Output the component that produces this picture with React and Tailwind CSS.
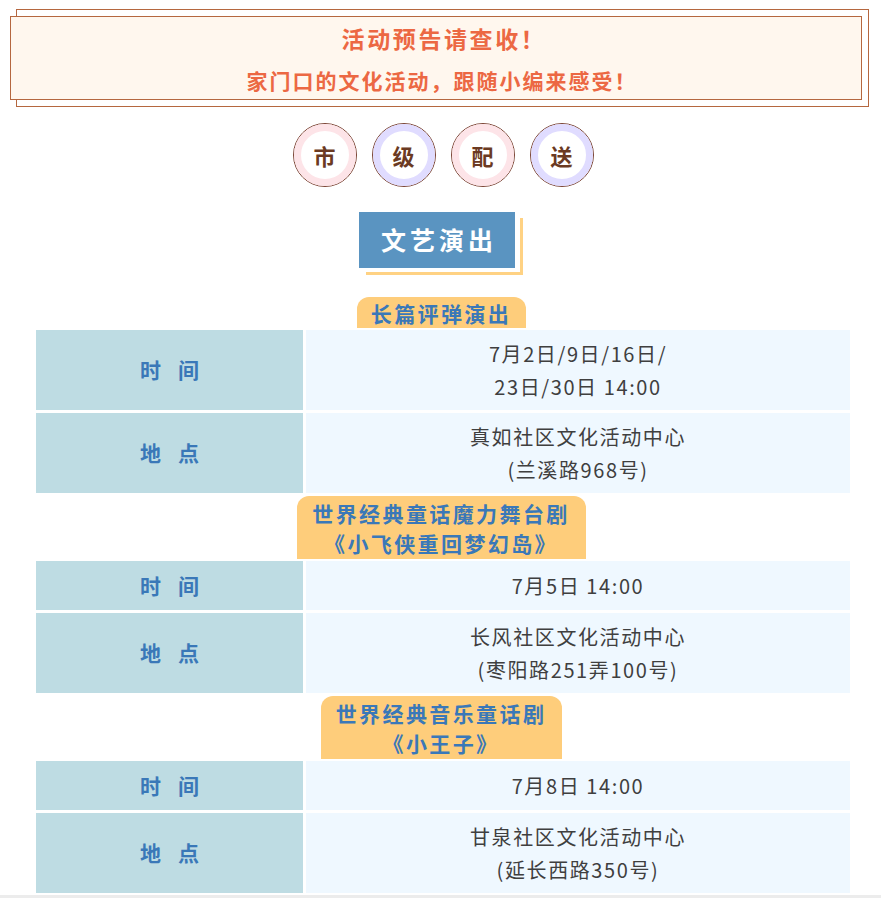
import React from "react";

const FONT = { fontFamily: '"Noto Sans CJK SC", "Noto Sans", sans-serif' };

const shows = [
  {
    title: ["长篇评弹演出"],
    width: "w-[169px]",
    time: ["7月2日/9日/16日/", "23日/30日 14:00"],
    place: ["真如社区文化活动中心", "(兰溪路968号)"],
  },
  {
    title: ["世界经典童话魔力舞台剧", "《小飞侠重回梦幻岛》"],
    width: "w-[289px]",
    time: ["7月5日 14:00"],
    place: ["长风社区文化活动中心", "(枣阳路251弄100号)"],
  },
  {
    title: ["世界经典音乐童话剧", "《小王子》"],
    width: "w-[241px]",
    time: ["7月8日 14:00"],
    place: ["甘泉社区文化活动中心", "(延长西路350号)"],
  },
];

function Circle({ char, ring }) {
  return (
    <div className="flex h-[64px] w-[64px] items-center justify-center rounded-full border border-[#7a4434] bg-white">
      <div className={`flex h-[62px] w-[62px] items-center justify-center rounded-full border-[7px] ${ring}`}>
        <span className="text-[22px] font-bold text-[#6b3a22]">{char}</span>
      </div>
    </div>
  );
}

function Row({ label, lines, tall }) {
  return (
    <div className={`flex gap-[3px] ${tall ? "h-[80px]" : "h-[49px]"}`}>
      <div className="flex w-[267px] items-center justify-center bg-[#bedce3]">
        <span className="pl-[17px] text-[21px] font-bold tracking-[17px] text-[#3a78b8]">{label}</span>
      </div>
      <div className="flex flex-1 flex-col items-center justify-center bg-[#eff8ff] text-[20px] leading-[33px] tracking-[1.6px] text-[#3f3f3f]">
        {lines.map((l) => (
          <div key={l}>{l}</div>
        ))}
      </div>
    </div>
  );
}

export default function App() {
  return (
    <div className="min-h-[899px] w-[881px] bg-white" style={FONT}>
      <div className="pt-[9px] pl-[16px]">
        <div className="h-[98px] w-[853px] border border-[#b5673f]">
          <div className="-ml-[7px] mt-[6px] flex h-[84px] w-[852px] flex-col items-center border border-[#b5673f] bg-[#fff7ee] text-[#ec6843]">
            <div className="mt-[5px] pl-[16px] text-[23px] font-bold leading-[32px] tracking-[2.6px]">活动预告请查收！</div>
            <div className="mt-[11px] pl-[12px] text-[21px] font-bold leading-[30px] tracking-[2px]">家门口的文化活动，跟随小编来感受！</div>
          </div>
        </div>
      </div>

      <div className="mt-[16px] flex justify-center gap-[15px] pl-[5px]">
        <Circle char="市" ring="border-[#fde4e8]" />
        <Circle char="级" ring="border-[#e0dcff]" />
        <Circle char="配" ring="border-[#fde4e8]" />
        <Circle char="送" ring="border-[#e0dcff]" />
      </div>

      <div className="mt-[25px] flex justify-center">
        <div className="relative ml-[1px] h-[63px] w-[164px]">
          <div className="absolute left-[7px] top-[6px] h-[57px] w-[157px] border-b-[3px] border-r-[3px] border-[#ffd283]" />
          <div className="relative flex h-[56px] w-[156px] items-center justify-center bg-[#5a94c1]">
            <span className="pl-[4px] text-[25px] font-bold tracking-[4px] text-white">文艺演出</span>
          </div>
        </div>
      </div>

      <div className="ml-[36px] mt-[22px] flex w-[814px] flex-col">
        {shows.map((s, i) => (
          <div key={i} className={`flex flex-col ${i > 0 ? "mt-[3px]" : ""}`}>
            <div className="flex justify-center">
              <div
                className={`${s.width} ml-[-4px] flex flex-col items-center justify-center rounded-t-[12px] bg-[#fecd7b] text-[21px] font-bold tracking-[2.4px] text-[#3a78b8] ${
                  s.title.length > 1 ? "h-[63px] leading-[30px]" : "h-[31px] leading-[30px]"
                }`}
              >
                {s.title.map((t) => (
                  <div key={t}>{t}</div>
                ))}
              </div>
            </div>
            <div className="mt-[2px] flex flex-col gap-[3px]">
              <Row label="时间" lines={s.time} tall={s.time.length > 1} />
              <Row label="地点" lines={s.place} tall />
            </div>
          </div>
        ))}
      </div>
      <div className="mt-[2px] h-[3px] w-full bg-[#ececec]" />
    </div>
  );
}
